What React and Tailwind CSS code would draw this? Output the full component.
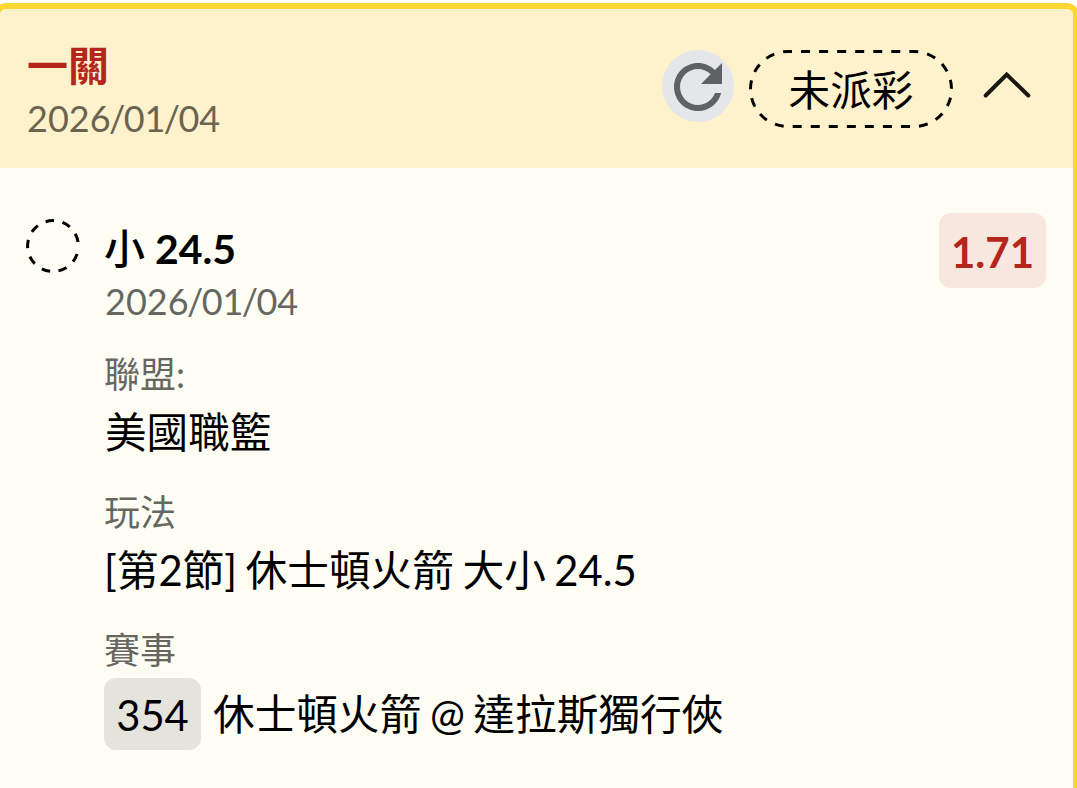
const RefreshIcon = () => (
    <svg width="72" height="72" viewBox="0 0 72 72" className="shrink-0">
        <circle cx="36" cy="36" r="36" fill="#e5e6e9" />
        <path
            transform="translate(0 1) scale(3)"
            fill="#606163"
            d="M17.65 6.35C16.2 4.9 14.21 4 12 4c-4.42 0-7.99 3.58-7.99 8s3.57 8 7.99 8c3.73 0 6.84-2.55 7.73-6h-2.08c-.82 2.33-3.04 4-5.65 4-3.31 0-6-2.69-6-6s2.69-6 6-6c1.66 0 3.14.69 4.22 1.78L13 11h7V4l-2.35 2.35z"
        />
    </svg>
);

const ChevronIcon = () => (
    <svg width="48" height="29" viewBox="0 0 48 29" fill="none" stroke="#1a1712" strokeWidth="4" strokeLinecap="round" className="shrink-0">
        <path d="M2.7 25.5L23.7 4.5L45.3 25.5" />
    </svg>
);

const DateText = ({ value }) =>
    value.split('/').map((part, i) => (
        <span key={i}>
            {i > 0 && <span className="-mx-[1.6px]">/</span>}
            {part}
        </span>
    ));

const Field = ({ label, children }) => (
    <div>
        <div className="h-[54px] text-[36px] leading-[54px] text-[#676761]">{label}</div>
        {children}
    </div>
);

export default function App() {
    return (
        <div className="h-[788px] w-[1077px] overflow-hidden bg-white pt-[3px] font-['Lato','Noto_Sans_CJK_TC',sans-serif] whitespace-nowrap text-black">
            <div className="-mr-0.5 -ml-1.5 h-[800px] overflow-hidden rounded-t-xl border-6 border-[#fcd631] bg-[#fefdf4]">
                <div className="flex h-[159px] bg-[#fef2cc] pl-[27px] pr-[42px]">
                    <div className="pt-[31px]">
                        <div className="h-[52px] text-[41px] leading-[52px] font-bold text-[#b4261b]">一關</div>
                        <div className="h-[50px] text-[36px] leading-[52px] text-[#6a6350]"><DateText value="2026/01/04" /></div>
                    </div>
                    <div className="ml-auto flex items-start pt-[41px]">
                        <RefreshIcon />
                        <div className="relative ml-[15px] h-[78px] w-[204px] text-center text-[41.6px] leading-[80px]">
                            <svg width="204" height="78" viewBox="0 0 204 78" className="absolute inset-0">
                                <rect x="1.5" y="1.5" width="201" height="75" rx="37.5" pathLength="487.6" fill="none" stroke="#000" strokeWidth="3" strokeDasharray="9 9.06" strokeDashoffset="5" />
                            </svg>
                            未派彩
                        </div>
                        <div className="mt-5 ml-[30px]"><ChevronIcon /></div>
                    </div>
                </div>
                <div className="flex pt-[45px] pr-[27px] pl-[26px]">
                    <svg width="54" height="54" viewBox="0 0 54 54" className="mt-[6px] shrink-0">
                        <circle cx="27" cy="27" r="25.4" fill="none" stroke="#000" strokeWidth="3" strokeDasharray="8.6" strokeDashoffset="-8.2" />
                    </svg>
                    <div className="ml-[24px]">
                        <div className="h-[64px] text-[41px] leading-[72px] font-bold">
                            <span className="font-medium">小</span> 24.5
                        </div>
                        <div className="h-[50px] pl-px text-[36px] leading-[48px] text-[#676761]"><DateText value="2026/01/04" /></div>
                        <div className="mt-[20px] [word-spacing:-2.2px]">
                            <Field label="聯盟:">
                                <div className="h-[84px] pl-px text-[41.6px] leading-[62px]">美國職籃</div>
                            </Field>
                            <Field label="玩法">
                                <div className="h-[84px] text-[41.7px] leading-[62px]">[第2節] 休士頓火箭 大小 24.5</div>
                            </Field>
                            <Field label="賽事">
                                <div className="mt-px flex h-[72px] items-center text-[41.7px]">
                                    <span className="mr-3 flex h-[72px] w-[97px] items-center justify-center rounded-xl bg-[#e5e4dc] pt-0.5">354</span>
                                    <span>休士頓火箭 @ 達拉斯獨行俠</span>
                                </div>
                            </Field>
                        </div>
                    </div>
                    <div className="ml-auto flex h-[75px] w-[107px] items-center justify-center rounded-xl bg-[#f8e7df] pt-[3px] text-[42px] font-bold text-[#b4261b]">1.71</div>
                </div>
            </div>
        </div>
    );
}
